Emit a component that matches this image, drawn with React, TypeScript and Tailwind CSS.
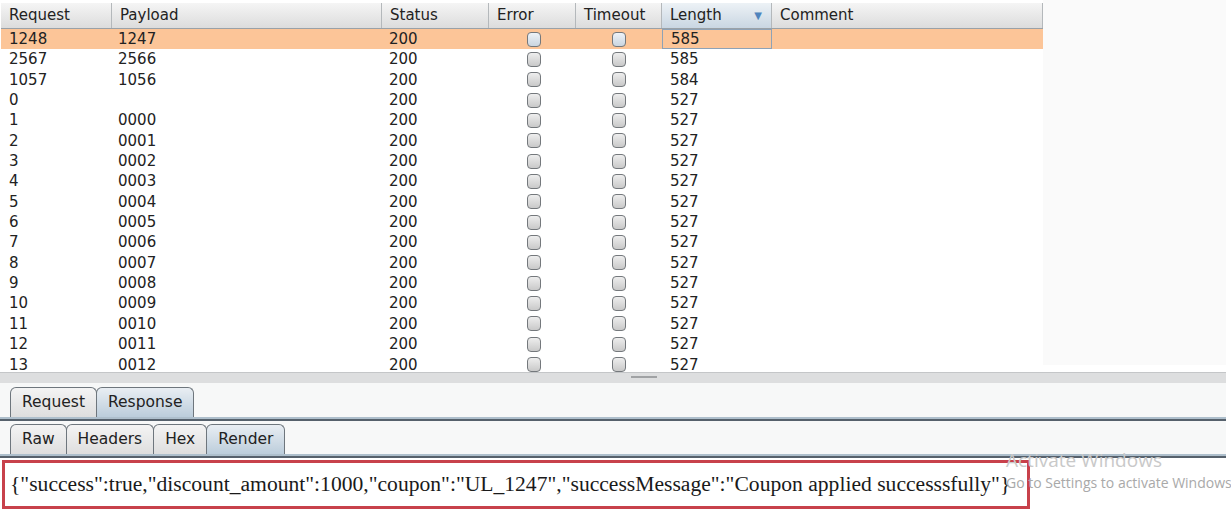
import React from "react";

const cols = [
  { label: "Request", w: "w-[111px]" },
  { label: "Payload", w: "w-[270px]" },
  { label: "Status", w: "w-[107px]" },
  { label: "Error", w: "w-[87px]" },
  { label: "Timeout", w: "w-[86px]" },
  { label: "Length", w: "w-[110px]" },
  { label: "Comment", w: "w-[271px]" },
];

const rows: string[][] = [
  ["1248", "1247", "585"],
  ["2567", "2566", "585"],
  ["1057", "1056", "584"],
  ["0", "", "527"],
  ...Array.from({ length: 13 }, (_, i) => [String(i + 1), String(i).padStart(4, "0"), "527"]),
];

function Check({ sel }: { sel: boolean }) {
  return (
    <div className={`w-[14px] h-[15px] rounded-[4px] border-[1.5px] border-[#74787c] ${sel ? "bg-gradient-to-b from-[#eef3f8] to-[#cad5e0]" : "bg-gradient-to-b from-[#eeeeee] to-[#c9c9c9]"}`} />
  );
}

function Tab({ label, active }: { label: string; active?: boolean }) {
  return (
    <div
      className={`h-[30px] px-[11px] flex items-center rounded-t-[6px] border border-b-0 border-[#6e767d] text-[15.5px] text-[#222] -mr-px ${
        active ? "bg-gradient-to-b from-[#e9eef3] to-[#bccddb]" : "bg-gradient-to-b from-[#f4f4f4] to-[#dedede]"
      }`}
    >
      {label}
    </div>
  );
}

export default function App() {
  return (
    <div className="relative w-[1231px] h-[524px] bg-white overflow-hidden" style={{ fontFamily: '"DejaVu Sans", sans-serif' }}>
      <div className="w-[1226px]">
        {/* results table */}
        <div className="flex h-[372px] overflow-hidden">
          <div className="w-[1043px] bg-white pl-px pt-[3px]">
            <div className="flex h-[26px] border-b border-[#9aa1a7]">
              {cols.map((c) => {
                const len = c.label === "Length";
                return (
                  <div
                    key={c.label}
                    className={`${c.w} flex items-center justify-between pl-[8px] pr-[9px] text-[15px] text-[#222] border-r border-[#b4b8bb] ${
                      len ? "bg-gradient-to-b from-[#edf2f6] to-[#c9d6e2]" : "bg-gradient-to-b from-[#f5f5f5] to-[#dcdcdc]"
                    }`}
                  >
                    <span>{c.label}</span>
                    {len && <span className="text-[10px] text-[#4f84bd]">▼</span>}
                  </div>
                );
              })}
            </div>
            {rows.map((r, i) => {
              const sel = i === 0;
              return (
                <div key={i} className={`flex h-[20.35px] text-[15px] text-[#222] leading-[20px] ${sel ? "bg-[#fcc598]" : ""}`}>
                  <div className="w-[111px] pl-[8px]">{r[0]}</div>
                  <div className="w-[270px] pl-[6px]">{r[1]}</div>
                  <div className="w-[107px] pl-[7px]">200</div>
                  <div className="w-[87px] flex items-center justify-center pl-[2px]"><Check sel={sel} /></div>
                  <div className="w-[86px] flex items-center justify-center"><Check sel={sel} /></div>
                  <div className={`w-[110px] pl-[8px] ${sel ? "border border-[#8ea2b6] leading-[18px]" : ""}`}>{r[2]}</div>
                  <div className="w-[271px]" />
                </div>
              );
            })}
          </div>
          <div className="flex-1 bg-[#fafafa] h-[365px]" />
        </div>

        {/* splitter */}
        <div className="h-[11px] border-t border-[#c4c6c8] bg-[#dddedf] flex justify-center">
          <div className="w-[26px] h-[2px] bg-[#a0a2a4] mt-[3px] ml-[62px]" />
        </div>

        {/* request / response tabs */}
        <div className="bg-[#f7f8f8] h-[36px] flex items-end pl-[10px] border-b-2 border-[#aebfcc]">
          <Tab label="Request" />
          <Tab label="Response" active />
        </div>
        <div className="h-[2px] bg-[#56616c]" />

        {/* raw / headers / hex / render */}
        <div className="bg-[#f7f8f8] h-[35px] flex items-end pl-[10px] border-b-2 border-[#aebfcc]">
          <Tab label="Raw" />
          <Tab label="Headers" />
          <Tab label="Hex" />
          <Tab label="Render" active />
        </div>
        <div className="h-[2px] bg-[#56616c]" />

        {/* rendered response */}
        <div className="pt-[2px] pl-[2px]">
          <div
            className="w-[1028px] h-[49px] border-[3px] border-[#c8414b] flex items-center pl-[5px] text-[21.6px] text-[#1a1a1a] whitespace-nowrap"
            style={{ fontFamily: '"Liberation Serif", serif' }}
          >
            {'{"success":true,"discount_amount":1000,"coupon":"UL_1247","successMessage":"Coupon applied successsfully"}'}
          </div>
        </div>
      </div>

      {/* windows activation watermark */}
      <div className="absolute left-[1006px] top-[447px] text-[#c9c9c9] whitespace-nowrap pointer-events-none" style={{ fontFamily: '"Open Sans", sans-serif' }}>
        <div className="text-[19px] leading-[26px]">Activate Windows</div>
        <div className="text-[14px] leading-[20px] text-[#a9a9a9]">Go to Settings to activate Windows</div>
      </div>
    </div>
  );
}
